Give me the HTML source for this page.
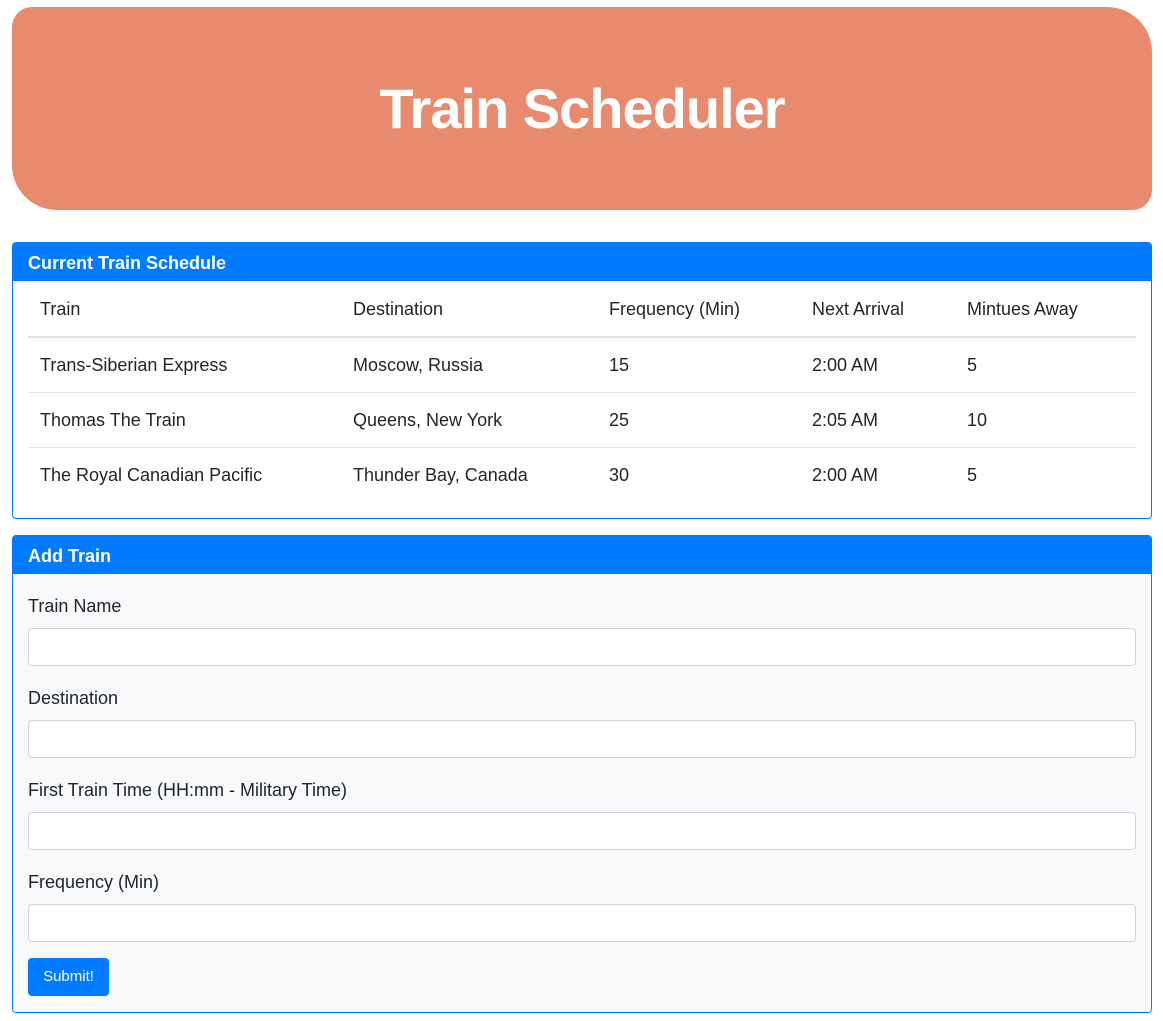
<!DOCTYPE html>
<html><head><style>
*{box-sizing:border-box}
body{margin:0;background:#fff;font-family:"Liberation Sans",sans-serif;color:#212529;font-size:18px}
.hdr{position:absolute;left:12px;top:7px;width:1140px;height:203px;background:#e88a6d;border-radius:20px 45px 20px 45px;color:#fff;font-weight:bold;font-size:56px;text-align:center;line-height:203px;letter-spacing:-1px}
.card{position:absolute;left:12px;width:1140px;border:1px solid #007bff;border-radius:4px;overflow:hidden}
.ch{background:#007bff;color:#fff;font-weight:bold;font-size:18px;height:38px;line-height:40px;padding-left:15px}
table{border-collapse:collapse;margin:0 15px;width:1108px}
td,th{font-weight:normal;text-align:left;padding:2px 12px 0;height:55px;border-top:1px solid #dee2e6}
th{border-top:none;border-bottom:2px solid #dee2e6;height:56px}
.body2{background:#f8f9fa;height:439px;position:relative}
.lbl{position:absolute;left:15px}
.inp{position:absolute;left:15px;width:1108px;height:38px;background:#fff;border:1px solid #ced4da;border-radius:4px}
.btn{position:absolute;left:15px;top:384px;width:81px;height:38px;background:#007bff;color:#fff;border-radius:4px;font-size:15px;text-align:center;line-height:38px}
</style></head><body>
<div class="hdr">Train Scheduler</div>
<div class="card" style="top:242px;height:277px">
<div class="ch">Current Train Schedule</div>
<table>
<tr><th style="width:313px">Train</th><th style="width:256px">Destination</th><th style="width:203px">Frequency (Min)</th><th style="width:155px">Next Arrival</th><th>Mintues Away</th></tr>
<tr><td>Trans-Siberian Express</td><td>Moscow, Russia</td><td>15</td><td>2:00 AM</td><td>5</td></tr>
<tr><td>Thomas The Train</td><td>Queens, New York</td><td>25</td><td>2:05 AM</td><td>10</td></tr>
<tr><td>The Royal Canadian Pacific</td><td>Thunder Bay, Canada</td><td>30</td><td>2:00 AM</td><td>5</td></tr>
</table>
</div>
<div class="card" style="top:535px;height:478px">
<div class="ch">Add Train</div>
<div class="body2">
<div class="lbl" style="top:22px">Train Name</div><div class="inp" style="top:54px"></div>
<div class="lbl" style="top:114px">Destination</div><div class="inp" style="top:146px"></div>
<div class="lbl" style="top:206px">First Train Time (HH:mm - Military Time)</div><div class="inp" style="top:238px"></div>
<div class="lbl" style="top:298px">Frequency (Min)</div><div class="inp" style="top:330px"></div>
<div class="btn">Submit!</div>
</div>
</div>
</body></html>
